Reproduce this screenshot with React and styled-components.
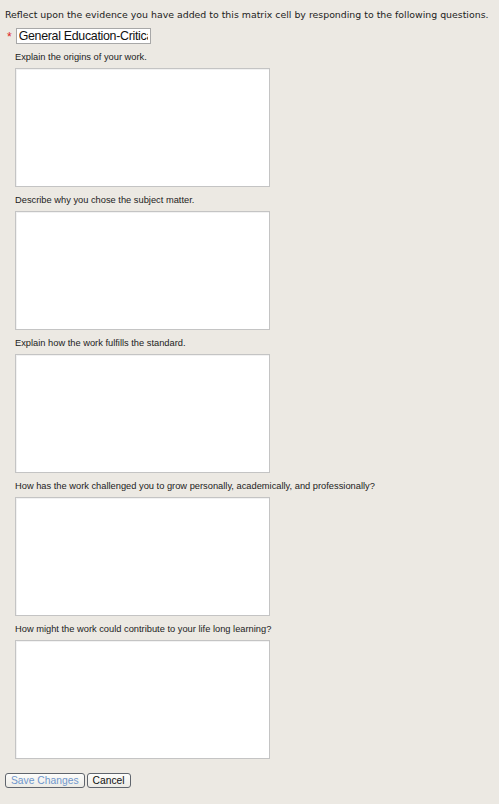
import React from "react";
import styled, { createGlobalStyle } from "styled-components";

const Global = createGlobalStyle`
  html, body { margin: 0; padding: 0; background: #ece9e3; }
  body { width: 499px; min-height: 804px; }
`;

const Page = styled.div`
  background: #ece9e3;
  min-height: 804px;
  padding: 8px 0 0 5px;
  box-sizing: border-box;
`;

const Intro = styled.p`
  margin: 0;
  font-family: "DejaVu Sans", Verdana, sans-serif;
  font-size: 9.4px;
  line-height: 13px;
  color: #222;
  white-space: nowrap;
`;

const TitleRow = styled.div`
  display: flex;
  align-items: center;
  gap: 4px;
  margin-top: 7px;
  padding-left: 2px;
`;

const Star = styled.span`
  color: #d22;
  font-family: "Liberation Sans", Arial, sans-serif;
  font-size: 12px;
  line-height: 12px;
  margin-top: 1px;
`;

const TitleInput = styled.input`
  width: 135px;
  height: 16px;
  box-sizing: border-box;
  border: 1px solid #a8a8a8;
  background: #fff;
  font-family: "Liberation Sans", Arial, sans-serif;
  font-size: 12.4px;
  letter-spacing: -0.3px;
  color: #111;
  padding: 0 2px;
  margin: 0;
  outline: none;
`;

const Questions = styled.div`
  display: flex;
  flex-direction: column;
  padding-left: 10px;
  margin-top: 8px;
  gap: 8px;
`;

const Question = styled.div`
  display: flex;
  flex-direction: column;
  gap: 5px;
`;

const Label = styled.label`
  font-family: "Liberation Sans", Arial, sans-serif;
  font-size: 9.3px;
  line-height: 11px;
  color: #222;
`;

const Area = styled.textarea`
  width: 255px;
  height: 119px;
  box-sizing: border-box;
  margin: 0;
  border: 1px solid #c4c4c4;
  box-shadow: inset 1px 1px 0 #f2f2f2;
  background: #fff;
  resize: none;
  outline: none;
`;

const Buttons = styled.div`
  display: flex;
  gap: 2px;
  margin-top: 14px;
`;

const Button = styled.button`
  height: 15px;
  box-sizing: border-box;
  padding: 0 5px;
  border: 1px solid #60656d;
  border-radius: 3px;
  background: linear-gradient(#fdfdfb, #ecebe6);
  font-family: "Liberation Sans", Arial, sans-serif;
  font-size: 10.3px;
  line-height: 12px;
  color: ${(p) => (p.$muted ? "#6f96cc" : "#111")};
  margin: 0;
`;

const questions = [
  "Explain the origins of your work.",
  "Describe why you chose the subject matter.",
  "Explain how the work fulfills the standard.",
  "How has the work challenged you to grow personally, academically, and professionally?",
  "How might the work could contribute to your life long learning?",
];

export default function App() {
  return (
    <>
      <Global />
      <Page>
        <Intro>
          Reflect upon the evidence you have added to this matrix cell by responding to the following questions.
        </Intro>
        <TitleRow>
          <Star>*</Star>
          <TitleInput defaultValue="General Education-Critical Thinking" />
        </TitleRow>
        <Questions>
          {questions.map((q) => (
            <Question key={q}>
              <Label>{q}</Label>
              <Area />
            </Question>
          ))}
        </Questions>
        <Buttons>
          <Button $muted>Save Changes</Button>
          <Button>Cancel</Button>
        </Buttons>
      </Page>
    </>
  );
}
